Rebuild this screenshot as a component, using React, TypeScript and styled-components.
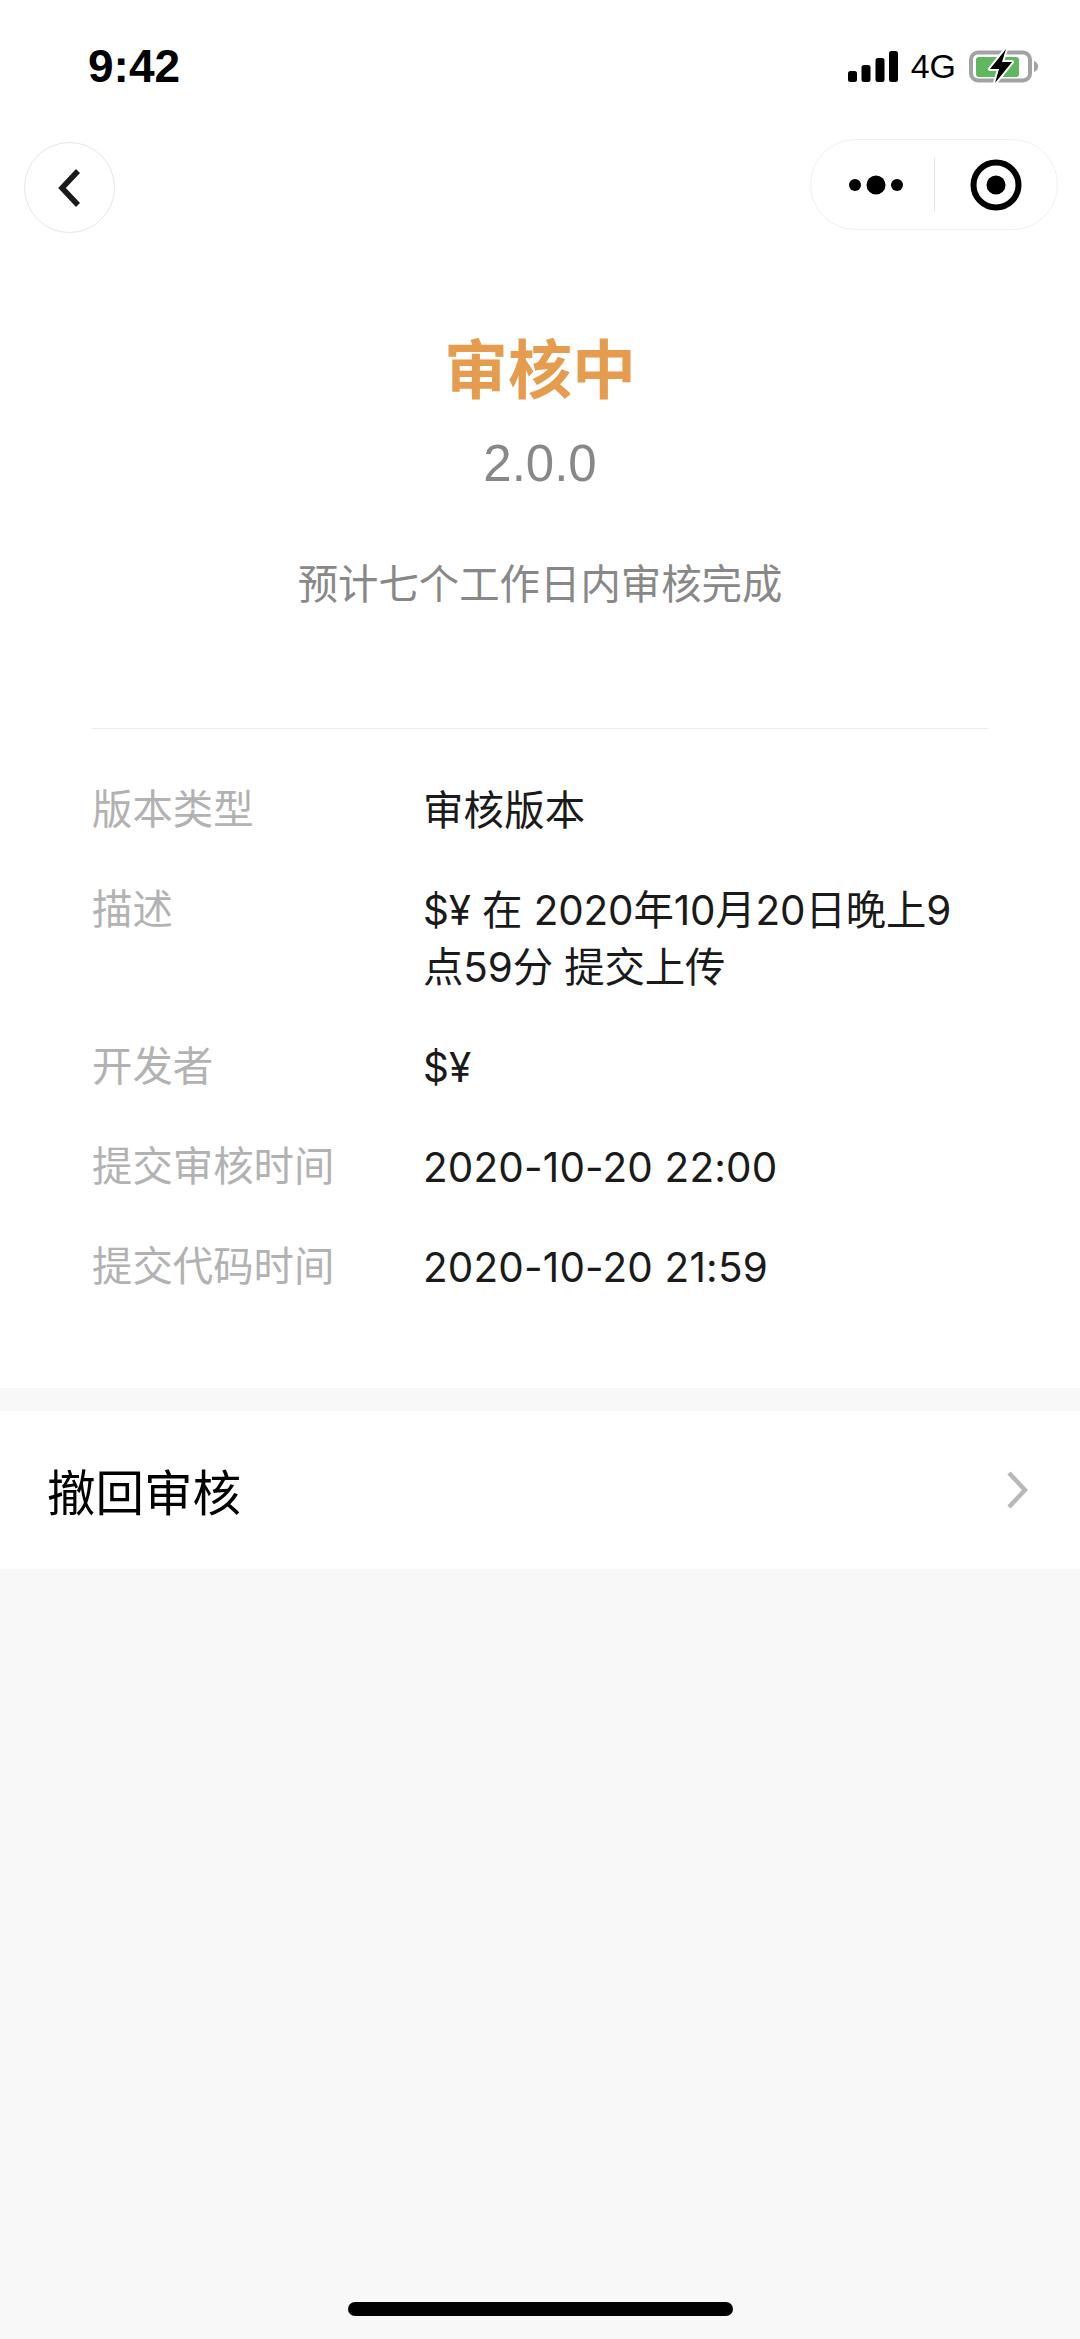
import React from 'react';
import styled, { createGlobalStyle } from 'styled-components';

const GlobalStyle = createGlobalStyle`
    html, body {
        margin: 0;
        padding: 0;
        background: #f8f8f8;
    }
`

const CJK = `"Liberation Sans", "Noto Sans CJK SC", sans-serif`
const VALUE_FONT = `Inter, "Noto Sans CJK SC", sans-serif`

const Page = styled.div`
    position: relative;
    width: 1080px;
    height: 2339px;
    overflow: hidden;
    background: #f8f8f8;
    font-family: ${CJK};
`

const TopSection = styled.div`
    background: #fff;
    padding-bottom: 92px;
`

const StatusBar = styled.div`
    display: flex;
    align-items: center;
    justify-content: space-between;
    height: 132px;
    padding: 0 41px 0 88px;
`

const Time = styled.div`
    font-size: 46px;
    font-weight: bold;
    color: #000;
`

const StatusIcons = styled.div`
    display: flex;
    align-items: center;
    gap: 13px;
`

const NetworkLabel = styled.div`
    font-size: 34px;
    color: #000;
`

const NavBar = styled.div`
    display: flex;
    align-items: flex-start;
    justify-content: space-between;
    padding: 6px 22px 0 24px;
`

const BackButton = styled.div`
    display: flex;
    align-items: center;
    justify-content: center;
    box-sizing: border-box;
    width: 91px;
    height: 91px;
    margin-top: 4px;
    border: 1px solid #e6e6e6;
    border-radius: 50%;
`

const Capsule = styled.div`
    display: flex;
    align-items: center;
    box-sizing: border-box;
    width: 248px;
    height: 91px;
    margin-top: 1px;
    padding-left: 6px;
    border: 1px solid #f0f0f0;
    border-radius: 46px;
`

const CapsuleSlot = styled.div<{ $width?: number }>`
    display: flex;
    flex: ${(props) => (props.$width ? `0 0 ${props.$width}px` : '1')};
    align-items: center;
    justify-content: center;
`

const CapsuleDivider = styled.div`
    width: 1px;
    height: 55px;
    background: #e8e8e8;
`

const Hero = styled.div`
    display: flex;
    flex-direction: column;
    align-items: center;
    padding-top: 98px;
`

const Title = styled.div`
    font-size: 64px;
    line-height: 80px;
    font-weight: bold;
    color: #e69c4e;
`

const Version = styled.div`
    margin-top: 23px;
    font-size: 51px;
    line-height: 60px;
    color: #888;
`

const Hint = styled.div`
    margin-top: 63px;
    font-size: 40.4px;
    line-height: 56px;
    color: #888;
`

const Details = styled.div`
    display: flex;
    flex-direction: column;
    gap: 43px;
    margin: 115px 92px 0;
    padding-top: 53px;
    border-top: 1px solid #ebebeb;
`

const Row = styled.div`
    display: flex;
    font-size: 40.4px;
    line-height: 57px;
`

const Label = styled.div`
    flex: 0 0 331px;
    color: #b2b2b2;
`

const Value = styled.div<{ $tracking: number }>`
    flex: 1;
    font-family: ${VALUE_FONT};
    letter-spacing: ${(props) => props.$tracking}px;
    color: #1a1a1a;
`

const ActionRow = styled.div`
    display: flex;
    align-items: center;
    justify-content: space-between;
    height: 158px;
    margin-top: 23px;
    padding: 0 52px 0 47px;
    background: #fff;
    font-size: 48.5px;
    color: #000;
`

const HomeIndicator = styled.div`
    position: absolute;
    left: 348px;
    bottom: 23px;
    width: 385px;
    height: 14px;
    border-radius: 7px;
    background: #000;
`

const SignalIcon = () => (
    <svg width="50" height="31" viewBox="0 0 50 31">
        <rect x="0" y="20" width="9" height="11" rx="2.5" fill="#000" />
        <rect x="13.5" y="14" width="9" height="17" rx="2.5" fill="#000" />
        <rect x="27.5" y="7" width="9" height="24" rx="2.5" fill="#000" />
        <rect x="41" y="0" width="9" height="31" rx="2.5" fill="#000" />
    </svg>
)

const BatteryIcon = () => (
    <svg width="70" height="36" viewBox="0 0 70 36">
        <rect x="2" y="4.5" width="59" height="28" rx="7" fill="none" stroke="#a3a3a3" strokeWidth="4" />
        <rect x="7" y="9" width="43" height="20" rx="3" fill="#5fb85f" />
        <path d="M65 13 C68 14 69 16 69 18.5 C69 21 68 23 65 24 Z" fill="#a3a3a3" />
        <path
            d="M37 1 L21 21 L30 21 L26 35 L43 14 L33 14 Z"
            fill="#000"
            stroke="#fff"
            strokeWidth="4"
            strokeLinejoin="round"
            paintOrder="stroke"
        />
    </svg>
)

const BackIcon = () => (
    <svg width="24" height="38" viewBox="0 0 24 38">
        <path d="M20 2 L4 19 L20 36" fill="none" stroke="#1a1a1a" strokeWidth="5.5" />
    </svg>
)

const MoreIcon = () => (
    <svg width="54" height="20" viewBox="0 0 54 20">
        <circle cx="6" cy="10" r="6" fill="#000" />
        <circle cx="27" cy="10" r="9.5" fill="#000" />
        <circle cx="48" cy="10" r="6" fill="#000" />
    </svg>
)

const TargetIcon = () => (
    <svg width="52" height="52" viewBox="0 0 52 52">
        <circle cx="26" cy="26" r="22.5" fill="none" stroke="#000" strokeWidth="6" />
        <circle cx="26" cy="26" r="9.5" fill="#000" />
    </svg>
)

const ChevronIcon = () => (
    <svg width="21" height="38" viewBox="0 0 21 38">
        <path d="M2 2 L18 19 L2 36" fill="none" stroke="#b8b8b8" strokeWidth="4.5" />
    </svg>
)

const details = [
    { label: '版本类型', value: '审核版本', tracking: 0.2 },
    { label: '描述', value: '$¥ 在 2020年10月20日晚上9点59分 提交上传', tracking: -0.12 },
    { label: '开发者', value: '$¥', tracking: 0.2 },
    { label: '提交审核时间', value: '2020-10-20 22:00', tracking: 0.2 },
    { label: '提交代码时间', value: '2020-10-20 21:59', tracking: 0.2 },
]

const App = () => {
    return (
        <Page>
            <GlobalStyle />
            <TopSection>
                <StatusBar>
                    <Time>9:42</Time>
                    <StatusIcons>
                        <SignalIcon />
                        <NetworkLabel>4G</NetworkLabel>
                        <BatteryIcon />
                    </StatusIcons>
                </StatusBar>
                <NavBar>
                    <BackButton>
                        <BackIcon />
                    </BackButton>
                    <Capsule>
                        <CapsuleSlot $width={117}>
                            <MoreIcon />
                        </CapsuleSlot>
                        <CapsuleDivider />
                        <CapsuleSlot>
                            <TargetIcon />
                        </CapsuleSlot>
                    </Capsule>
                </NavBar>
                <Hero>
                    <Title>审核中</Title>
                    <Version>2.0.0</Version>
                    <Hint>预计七个工作日内审核完成</Hint>
                </Hero>
                <Details>
                    {details.map((item) => (
                        <Row key={item.label}>
                            <Label>{item.label}</Label>
                            <Value $tracking={item.tracking}>{item.value}</Value>
                        </Row>
                    ))}
                </Details>
            </TopSection>
            <ActionRow>
                撤回审核
                <ChevronIcon />
            </ActionRow>
            <HomeIndicator />
        </Page>
    )
}

export default App;
